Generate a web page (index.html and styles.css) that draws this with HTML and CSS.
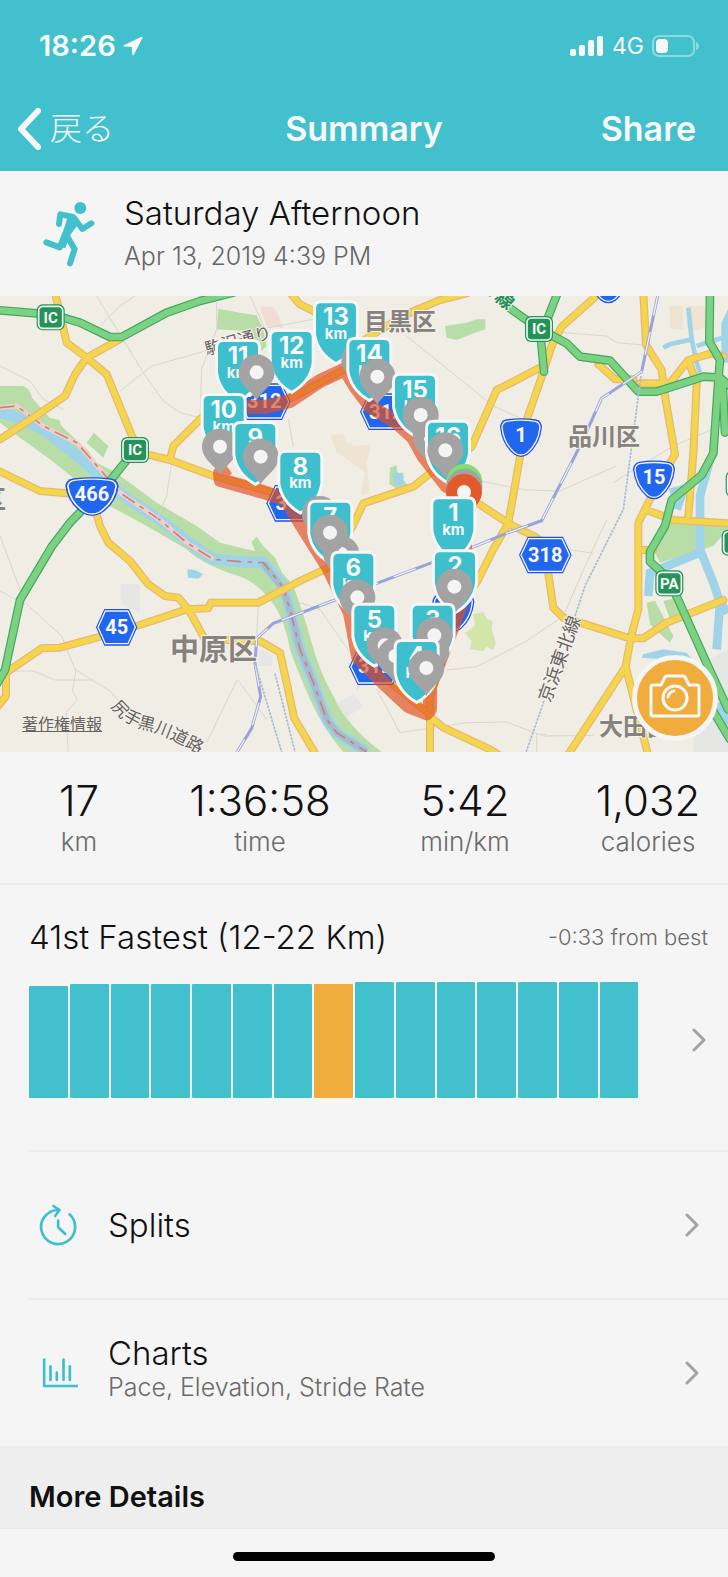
FILE: index.html
```
<!DOCTYPE html>
<html lang="ja">
<head>
    <meta charset="UTF-8">
    <meta name="viewport" content="width=device-width, initial-scale=1.0">
    <title>Summary</title>
    <link rel="stylesheet" href="styles.css">
</head>
<body>
    <header class="header">
        <div class="status-bar">
            <div class="status-time">
                <span>18:26</span>
                <svg class="icon-location" viewBox="0 0 20 20"><path d="M18.6 .8 .8 9.200q-1 .8.3 1.400l7.800.3.4 7.600q.5 1.600 1.500.2L19.600 1.700q.2-1.100-1-.9z"/></svg>
            </div>
            <div class="status-icons">
                <svg class="icon-signal" viewBox="0 0 34 22">
                    <rect x="0" y="14" width="6" height="7" rx="2"/>
                    <rect x="9" y="10" width="6" height="11" rx="2"/>
                    <rect x="18" y="5" width="6" height="16" rx="2"/>
                    <rect x="27" y="1" width="6" height="20" rx="2"/>
                </svg>
                <span class="network">4G</span>
                <svg class="icon-battery" viewBox="0 0 48 22">
                    <rect class="battery-case" x="1" y="1" width="41" height="20" rx="6"/>
                    <path class="battery-tip" d="M44 7q3 1 3 4t-3 4z"/>
                    <rect x="4" y="4" width="12" height="14" rx="4"/>
                </svg>
            </div>
        </div>
        <nav class="nav-bar">
            <button class="back-btn">
                <svg viewBox="0 0 24 42"><path d="M21 3 4 21l17 18"/></svg>
                <span>戻る</span>
            </button>
            <h1>Summary</h1>
            <button class="share-btn">Share</button>
        </nav>
    </header>

    <main>
        <section class="activity">
            <svg class="icon-runner" viewBox="40 36 156 198">
                <circle cx="152" cy="57" r="18"/>
                <path class="limb" d="M88 105l4-29 38 8 28 36 27-17M50 160l40 15 17-41 28 46-14 43"/>
                <path d="M114 74l20 4q12 6 17 20l-31 42-13 38-22-6 13-38 13-40z"/>
            </svg>
            <div>
                <h2>Saturday Afternoon</h2>
                <p>Apr 13, 2019 4:39 PM</p>
            </div>
        </section>

        <section class="map">
            <svg class="map-canvas" viewBox="0 0 2184 1368">
                <defs>
                    <path id="flag" d="M-44 0H44Q60 0 60 16V92Q52 146 0 176Q-52 146-60 92V16Q-60 0-44 0z"/>
                    <g id="pin">
                        <path d="M0 84C-14 56-54 38-54 0a54 54 0 0 1 108 0C54 38 14 56 0 84z"/>
                        <circle r="21" fill="#f4f4f4"/>
                    </g>
                    <g id="ic">
                        <rect x="-42" y="-39" width="84" height="78" rx="18" fill="#24935a"/>
                        <rect x="-36" y="-33" width="72" height="66" rx="13" fill="#24935a" stroke="#f4f4f4" stroke-width="5"/>
                    </g>
                    <g id="hex">
                        <path d="M-37-55H37L62 0 37 55H-37L-62 0z" fill="#1c50e8"/>
                        <path d="M-34-49H34L56 0 34 49H-34L-56 0z" fill="#2166ee" stroke="#f4f4f4" stroke-width="4"/>
                    </g>
                    <g id="hex-wide">
                        <path d="M-53-55H53L79 0 53 55H-53L-79 0z" fill="#1c50e8"/>
                        <path d="M-50-49H50L73 0 50 49H-50L-73 0z" fill="#2166ee" stroke="#f4f4f4" stroke-width="4"/>
                    </g>
                    <g id="onigiri">
                        <path d="M-44-55Q0-62 44-55 62-50 63-32 58 20 22 50 0 66-22 50-58 20-63-32-62-50-44-55z" fill="#1c50e8"/>
                        <path d="M-43-49Q0-56 43-49 56-46 57-31 52 17 19 45 0 59-19 45-52 17-57-31-56-46-43-49z" fill="#2166ee" stroke="#f4f4f4" stroke-width="4"/>
                    </g>
                    <path id="road-name" d="M332 1232Q372 1286 440 1302T640 1400"/>
                </defs>

                <!-- land, parks, water -->
                <rect class="land" width="2184" height="1368"/>
                <g class="park">
                    <path d="M0 270H68Q88 274 96 305L150 366 178 372 184 390 262 462 290 500 340 525 400 568 470 620 590 690 660 740 720 755 765 765 755 738 770 722 790 750 825 785 845 828 880 870Q910 950 935 1040T1000 1200Q1040 1290 1145 1368H1030Q970 1300 930 1210T870 1060Q850 950 800 900 760 850 690 832 600 800 560 760L440 690 330 630 250 570 150 490 60 425 0 380z"/>
                    <path d="M260 440 282 410 325 450 310 485z"/>
                    <path d="M655 38 720 50 770 58 790 100 800 150 785 165 740 105 650 100z"/>
                    <path d="M1335 90 1400 80 1430 70 1456 70V100L1420 112 1370 132 1340 125z"/>
                    <path d="M1170 515 1190 508 1192 530 1212 530 1205 545 1225 570 1195 582 1168 564z"/>
                    <path d="M2000 672H2184V700L2140 750 2080 770 1980 800 1960 760zM1940 920 1965 915 2020 1020 2010 1040 1950 985zM1990 915 2030 905 2050 960 2010 970z"/>
                    <path class="park-light" d="M1420 955 1450 948 1462 970 1478 975 1475 1000 1487 1040 1480 1062 1460 1052 1450 1065 1410 1060 1415 1035 1395 1010 1425 990z"/>
                </g>
                <path class="built" d="M992 417 1030 415 1040 440 1070 450 1110 445V465L1100 500 1110 590 1082 598 1095 530 1040 490 1010 470zM2008 30 2050 28V100H2012zM2060 30 2115 30V95L2080 105 2060 95z"/>
                <path class="campus" d="M780 35Q800 25 825 38L850 95 800 90z"/>
                <path class="block" d="M362 865H420V950L362 925zM780 1060 820 1080 815 1110 775 1110zM1010 1220 1060 1195 1090 1230 1040 1265zM2090 1110 2184 1060V1368H2080z"/>
                <g class="water">
                    <path d="M562 820 585 822 610 835 595 848 564 845zM2164 80 2184 40V200H2164zM1178 532 1192 528 1212 540 1205 574 1185 566zM1930 1075 1990 1060 2060 1070 2100 1120 2060 1110 1990 1090 1925 1085zM2150 1222 2184 1210V1290L2150 1262z"/>
                    <path class="canal" d="M2065 35 2075 130 2010 145 1990 155M2075 130 2090 200 2100 230M2090 150 2184 120"/>
                    <path class="canal wide" d="M2130 490 2100 600V760L2140 860 2160 920 2184 950M2100 770 1950 830 1945 900M2010 590 2050 580 2030 640M2160 920 2150 1060"/>
                    <path class="river" d="M0 350 60 366 130 400 220 470 280 520 340 575 400 620 480 672 560 735 640 790 720 797 790 800 850 870 875 960 900 1060 940 1160 980 1270 1010 1310 1100 1368"/>
                </g>
                <path class="river-bank" d="M0 335 50 330 130 390 230 440 300 520 360 590 480 672 560 740 640 790"/>
                <path class="river-core" d="M790 802 850 880 875 960 900 1060 940 1160 980 1270 1010 1310 1100 1368"/>
                <path class="border-line" d="M0 335 50 330 130 390 230 440 300 520 360 590 480 672 560 740 640 790 720 797 790 800 850 875 875 960 900 1060 940 1160 980 1270 1010 1310 1100 1368"/>

                <g class="lane">
                    <path d="M290 0 360 115 430 230 490 315 540 350 600 365M405 0 360 30 300 90M360 285 455 210 600 170 780 100 940 70M650 20V100L605 220 600 370M0 210 90 255 130 310 190 340M750 0 800 110M865 370 880 450M515 500 500 600 470 672M0 720 75 920 185 1020 225 1120 330 1185 420 1290M0 885 75 925M0 1125H100L165 1152H280M228 1120 218 1185 232 1212 198 1250 205 1368"/>
                    <path d="M1220 120 1480 330 1580 375M1440 555 1580 582 1680 585 1780 540 1850 510M1340 1122 1430 1112 1580 1035 1690 960 1760 800 1820 672M1130 1180 1200 1310 1400 1280 1520 1278 1630 1320 1780 1318M1610 1368V1315H1640M1690 110 1820 120 1850 140 1940 148M1840 560 1870 540 2020 450 2184 380M900 920 960 940 1050 1070M775 930 770 1020M620 1340 712 1150 800 1270M1110 1130 1070 1180M1700 760 1780 772"/>
                </g>

                <!-- roads -->
                <g class="road-case">
                    <path id="main-roads" d="M165-10 200 140 260 185 320 235 398 425 440 475 510 492 640 540 820 590M360 130 260 185 225 235 195 300 100 365 0 430-10 435M-10 522 120 585 200 592 275 600 300 690 325 740 390 795 445 865 495 900 535 905 565 940 615 1030 780 1035 840 1070 860 1160 882 1265 950 1380M-10 1235 18 1200V1130L125 1057 180 1055 290 1025 410 990 560 940 625 937 632 920H775L900 855 985 815M1000 800 1062 682 1090 622 1240 572 1290 532 1350 500 1415 452 1490 282 1530 262 1625 212M510 490 520 450 600 370 700 290M870-10 900 25 940 45 1010 100M1050 160 1140 102 1230 50 1320 12 1400-8M1800-10 1685 92 1655 150 1625 242 1580 372 1560 482 1525 682 1480 760 1435 850 1380 940 1290 1200V1375M1290 1262 1330 1295 1470 1360 1510 1385M1400 600 1530 685 1600 720 1640 745V800L1660 935 1690 965 1740 980 1890 1027H1930L2000 980 2170 912M1930-10 1938 147 1985 222 1995 300 2025 475 1955 600 1915 680V940L1893 1022 1877 1112 1705 1375M1877 1112 1945 1380M1920 262H2010L2065 192 2135 172 2170 182M2065 195 2090 262 2080 472 2065 660M1940 642 2020 672 2190 682M1795 205 1845 250H1900M1915 762H1960M870 308 1030 222M1160 1150 1290 1255"/>
                </g>
                <use href="#main-roads" class="road"/>
                <g class="express-case">
                    <path id="express" d="M-10 42 110 52 190 65 240 80 330 123H365L500 50 600 15 700-10M390 480 330 555 210 680 155 752 60 912 15 1122-10 1165M1530 37 1617 99M1673-10 1640 75 1617 99 1623 132 1632 227M1640 110 1700 142 1740 182 1830 194 1915 287H1970L2110 242 2160 245 2190 270M2130-10 2128 137 2160 192 2155 252 2140 472 2105 537 2015 612 1995 690 1950 767V797L2000 842 2035 912 2120 1102 2184 1240M2130 1230 2190 1330M2168 260 2175 410"/>
                </g>
                <use href="#express" class="express"/>

                <!-- railways -->
                <path class="rail" d="M1975-10 1925 227 1805 307 1740 450 1625 674 1530 708 1410 757 1130 862 1005 912 820 982 770 1027 765 1102 782 1202 755 1297 705 1378"/>
                <path class="rail-dash" d="M1975-10 1925 227 1805 307 1740 450 1625 674 1530 708 1410 757 1130 862 1005 912 820 982 770 1027 765 1102 782 1202 755 1297 705 1378"/>
                <path class="rail-dots" d="M1923 240 1870 640 1820 740 1755 870 1725 960M1632 1215 1576 1375M765 1102 845 1368M825 1132 885 1368"/>

                <!-- place names -->
                <g class="place">
                    <text x="1092" y="103" font-size="72">目黒区</text>
                    <text x="1704" y="446" font-size="72">品川区</text>
                    <text x="510" y="1093" font-size="87">中原区</text>
                    <text x="-60" y="640" font-size="78">区</text>
                    <text x="1797" y="1318" font-size="72">大田区</text>
                </g>
                <g class="street">
                    <text transform="translate(620 178) rotate(-15)" font-size="51">駒沢通り</text>
                    <text font-size="51"><textPath href="#road-name">尻手黒川道路</textPath></text>
                    <text transform="translate(1650 1222) rotate(-70)" font-size="54">京浜東北線</text>
                    <text class="street-green" transform="translate(1440-26) rotate(40)" font-size="54">号線</text>
                </g>

                <!-- route number signs -->
                <g class="sign">
                    <use href="#ic" x="152" y="64"/><text x="152" y="80">IC</text>
                    <use href="#ic" x="405" y="462"/><text x="405" y="478">IC</text>
                    <use href="#ic" x="1617" y="99"/><text x="1617" y="115">IC</text>
                    <use href="#ic" x="2008" y="862"/><text x="2008" y="878">PA</text>
                    <use href="#ic" x="2219" y="564"/>
                    <use href="#ic" x="2207" y="740"/>
                </g>
                <g class="sign sign-route">
                    <g transform="translate(276 602) scale(1.27 1)"><use href="#onigiri"/></g><text x="276" y="614">466</text>
                    <use href="#onigiri" x="1563" y="425"/><text x="1563" y="438">1</text>
                    <use href="#onigiri" x="1962" y="552"/><text x="1962" y="565">15</text>
                    <use href="#onigiri" x="1825" y="-36"/>
                    <use href="#onigiri" x="1360" y="950"/>
                    <use href="#hex" x="350" y="994"/><text x="350" y="1014">45</text>
                    <use href="#hex-wide" x="1636" y="777"/><text x="1636" y="797">318</text>
                    <use href="#hex-wide" x="793" y="317"/><text x="793" y="335">312</text>
                    <use href="#hex-wide" x="1159" y="347"/><text x="1159" y="368">312</text>
                    <use href="#hex-wide" x="878" y="622"/><text x="878" y="642">312</text>
                    <use href="#hex-wide" x="1126" y="1112"/><text x="1126" y="1132">312</text>
                </g>

                <!-- run track -->
                <path class="track" d="M684 515 660 532 662 552 790 588 860 612 900 680 985 815 1050 950 1075 1085 1150 1160 1225 1230 1280 1252 1290 1240 1290 1170 1370 960 1390 900 1395 750 1392 600 1340 570 1270 480 1240 425 1190 380 1110 330 1065 270 1035 220 960 255 870 315 800 332H742"/>

                <!-- km flags and photo pins, north to south -->
                <g class="flags">
                    <g transform="translate(1008 22)"><use href="#flag"/><text y="66">13</text><text class="unit" y="107">km</text></g>
                    <g transform="translate(875 108)"><use href="#flag"/><text y="66">12</text><text class="unit" y="107">km</text></g>
                    <g transform="translate(714 138)"><use href="#flag"/><text y="66">11</text><text class="unit" y="107">km</text></g>
                    <use href="#pin" x="770" y="229"/>
                    <use href="#pin" x="1078" y="192"/>
                    <g transform="translate(1108 132)"><use href="#flag"/><text y="66">14</text><text class="unit" y="107">km</text></g>
                    <use href="#pin" x="1132" y="242"/>
                    <g transform="translate(671 300)"><use href="#flag"/><text y="66">10</text><text class="unit" y="107">km</text></g>
                    <use href="#pin" x="660" y="452"/>
                    <g transform="translate(1245 239)"><use href="#flag"/><text y="66">15</text><text class="unit" y="107">km</text></g>
                    <use href="#pin" x="1292" y="425"/>
                    <use href="#pin" x="1262" y="357"/>
                    <g transform="translate(766 384)"><use href="#flag"/><text y="66">9</text><text class="unit" y="107">km</text></g>
                    <use href="#pin" x="782" y="482"/>
                    <g transform="translate(1344 380)"><use href="#flag"/><text y="66">16</text><text class="unit" y="107">km</text></g>
                    <use href="#pin" x="1336" y="463"/>
                    <g transform="translate(901 470)"><use href="#flag"/><text y="66">8</text><text class="unit" y="107">km</text></g>
                    <use href="#pin" class="pin-start" x="1393" y="558"/>
                    <use href="#pin" x="1393" y="572"/>
                    <use href="#pin" class="pin-end" x="1392" y="588"/>
                    <g transform="translate(1360 610)"><use href="#flag"/><text y="66">1</text><text class="unit" y="107">km</text></g>
                    <use href="#pin" x="960" y="654"/>
                    <g transform="translate(991 620)"><use href="#flag"/><text y="66">7</text><text class="unit" y="107">km</text></g>
                    <use href="#pin" x="1024" y="774"/>
                    <use href="#pin" x="990" y="710"/>
                    <g transform="translate(1060 773)"><use href="#flag"/><text y="66">6</text><text class="unit" y="107">km</text></g>
                    <use href="#pin" x="1072" y="904"/>
                    <g transform="translate(1365 769)"><use href="#flag"/><text y="66">2</text><text class="unit" y="107">km</text></g>
                    <use href="#pin" x="1363" y="872"/>
                    <g transform="translate(1123 929)"><use href="#flag"/><text y="66">5</text><text class="unit" y="107">km</text></g>
                    <use href="#pin" x="1154" y="1048"/>
                    <use href="#pin" x="1186" y="1080"/>
                    <g transform="translate(1298 929)"><use href="#flag"/><text y="66">3</text><text class="unit" y="107">km</text></g>
                    <use href="#pin" x="1294" y="1064"/>
                    <use href="#pin" x="1303" y="1018"/>
                    <g transform="translate(1250 1038)"><use href="#flag"/><text y="66">4</text><text class="unit" y="107">km</text></g>
                    <use href="#pin" x="1279" y="1116"/>
                </g>
            </svg>
            <a class="map-legal" href="#">著作権情報</a>
            <button class="camera-btn" aria-label="Camera">
                <svg viewBox="0 0 52 44">
                    <path d="M4 11H12L16 3Q16.500 2 18 2H34Q35.500 2 36 3L40 11H48Q50 11 50 13V40Q50 42 48 42H4Q2 42 2 40V13Q2 11 4 11z"/>
                    <circle cx="26" cy="24" r="12"/>
                    <path d="M19 23Q20 18 25 17"/>
                </svg>
            </button>
        </section>

        <section class="stats">
            <div><strong>17</strong><span>km</span></div>
            <div><strong>1:36:58</strong><span>time</span></div>
            <div><strong>5:42</strong><span>min/km</span></div>
            <div><strong>1,032</strong><span>calories</span></div>
        </section>

        <section class="fastest">
            <div class="fastest-head">
                <h2>41st Fastest (12-22 Km)</h2>
                <span>-0:33 from best</span>
            </div>
            <div class="fastest-body">
                <div class="bars">
                    <i style="height: 112px"></i>
                    <i style="height: 114px"></i>
                    <i style="height: 114px"></i>
                    <i style="height: 114px"></i>
                    <i style="height: 114px"></i>
                    <i style="height: 114px"></i>
                    <i style="height: 114px"></i>
                    <i class="current" style="height: 114px"></i>
                    <i style="height: 116px"></i>
                    <i style="height: 116px"></i>
                    <i style="height: 116px"></i>
                    <i style="height: 116px"></i>
                    <i style="height: 116px"></i>
                    <i style="height: 116px"></i>
                    <i style="height: 116px"></i>
                </div>
                <svg class="chevron" viewBox="0 0 14 24"><path d="M2 2l10 10L2 22"/></svg>
            </div>
        </section>

        <a class="row" href="#">
            <svg class="icon-splits" viewBox="28 28 116 126"><path d="M119 59A51 51 0 1 1 88 46M71 34l18 12-13 18M85 78v20l21 20"/></svg>
            <span class="row-text"><b>Splits</b></span>
            <svg class="chevron" viewBox="0 0 14 24"><path d="M2 2l10 10L2 22"/></svg>
        </a>
        <a class="row" href="#">
            <svg class="icon-charts" viewBox="28 470 116 126"><path d="M43 493v79h99M62 513v41M81 532v22M101 493v61M120 513v41"/></svg>
            <span class="row-text"><b>Charts</b><small>Pace, Elevation, Stride Rate</small></span>
            <svg class="chevron" viewBox="0 0 14 24"><path d="M2 2l10 10L2 22"/></svg>
        </a>

        <h3 class="more">More Details</h3>
    </main>
    <footer class="home"><div class="home-indicator"></div></footer>
</body>
</html>
```
FILE: styles.css
```
* {
    box-sizing: border-box;
}

body {
    margin: 0;
    font-family: Inter, "Noto Sans CJK JP", sans-serif;
    font-weight: 300;
    background-color: #f5f5f5;
    color: #111;
}

h1, h2, h3, p {
    margin: 0;
    font-weight: 300;
}

button {
    padding: 0;
    border: none;
    background: none;
    color: inherit;
    font-family: inherit;
    cursor: pointer;
}

a {
    color: inherit;
    text-decoration: none;
}

svg {
    display: block;
}

/* header */
.header {
    height: 171px;
    background-color: #43c0ce;
    color: #f8f8f8;
}

.status-bar {
    display: flex;
    justify-content: space-between;
    padding: 28px 28px 0 39px;
    height: 86px;
    line-height: 36px;
}

.status-time, .status-icons {
    display: flex;
    align-items: center;
    height: 36px;
}

.status-time {
    gap: 7px;
    font-size: 29px;
    font-weight: 600;
}

.status-icons {
    gap: 8px;
    font-size: 23px;
    font-weight: 400;
}

.header svg {
    fill: #f8f8f8;
}

.icon-location {
    width: 20px;
    height: 20px;
}

.icon-signal {
    width: 34px;
    height: 22px;
}

.icon-battery {
    width: 48px;
    height: 22px;
}

.header .battery-case {
    fill: none;
    stroke: #8fd9e1;
    stroke-width: 2;
}

.header .battery-tip {
    fill: #8fd9e1;
}

.nav-bar {
    display: grid;
    grid-template-columns: 1fr auto 1fr;
    align-items: center;
    height: 85px;
}

.back-btn {
    display: flex;
    align-items: center;
    gap: 9px;
    padding-left: 17px;
    font-size: 32px;
    line-height: 42px;
    font-weight: 300;
}

.back-btn svg {
    width: 24px;
    height: 42px;
    fill: none;
    stroke: #f8f8f8;
    stroke-width: 6;
    stroke-linecap: round;
    stroke-linejoin: round;
}

.nav-bar h1, .share-btn {
    font-size: 34px;
    line-height: 44px;
    font-weight: 600;
}

.share-btn {
    justify-self: end;
    padding-right: 32px;
}

/* activity title */
.activity {
    display: flex;
    align-items: center;
    gap: 29px;
    height: 125px;
    padding-left: 43px;
}

.icon-runner {
    width: 52px;
    height: 66px;
    fill: #43c0ce;
}

.icon-runner .limb {
    fill: none;
    stroke: #43c0ce;
    stroke-width: 18;
    stroke-linecap: round;
    stroke-linejoin: round;
}

.activity h2, .fastest h2 {
    font-size: 33px;
    line-height: 44px;
}

.activity p {
    font-size: 25px;
    line-height: 42px;
    color: #666;
}

/* map */
.map {
    position: relative;
}

.map-canvas {
    width: 100%;
    height: auto;
    overflow: hidden;
}

.land {
    fill: #f0ede5;
}

.park {
    fill: #b9dda6;
}

.park-light {
    fill: #d2e6aa;
}

.built {
    fill: #efe4d2;
}

.campus {
    fill: #f2dcd8;
}

.block {
    fill: #e6e6e4;
}

.water {
    fill: #9fd4e8;
}

.canal, .river {
    fill: none;
    stroke: #9fd4e8;
    stroke-width: 14;
}

.canal.wide {
    stroke-width: 26;
}

.river {
    stroke-width: 34;
}

.river-bank, .river-core {
    fill: none;
    stroke: #f1cfc8;
    stroke-width: 14;
}

.river-core {
    stroke: #a5bccb;
    stroke-width: 20;
}

.border-line {
    fill: none;
    stroke: #cf8078;
    stroke-width: 5;
    stroke-dasharray: 44 18 14 18;
}

.lane {
    fill: none;
    stroke: #d9d6cf;
    stroke-width: 3;
}

.road-case, .road, .express-case, .express {
    fill: none;
    stroke-linejoin: round;
    stroke-linecap: round;
}

.road-case {
    stroke: #e9b477;
    stroke-width: 24;
}

/* same shape again, narrower, over its outline */
.road {
    stroke: #f4d64d;
    stroke-width: 17;
}

.express-case {
    stroke: #46a565;
    stroke-width: 26;
}

.express {
    stroke: #7bd381;
    stroke-width: 19;
}

.rail, .rail-dash, .rail-dots {
    fill: none;
    stroke: #9aa2da;
    stroke-width: 9;
}

.rail-dash {
    stroke: #f0effa;
    stroke-width: 4;
    stroke-dasharray: 70 50;
}

.rail-dots {
    stroke: #a5bdd3;
    stroke-width: 5;
    stroke-dasharray: 8 3;
}

.place, .street {
    font-family: "Noto Sans CJK JP", sans-serif;
    font-weight: 400;
    fill: #86827d;
    stroke: #f4f2ec;
    stroke-width: 6;
    stroke-linejoin: round;
    paint-order: stroke;
}

.place {
    font-weight: 700;
}

.street {
    fill: #66625e;
}

.street-green {
    fill: #24935a;
    font-weight: 700;
}

.sign {
    font-family: Roboto, sans-serif;
    font-size: 45px;
    font-weight: 700;
    text-anchor: middle;
    fill: #f8f8f8;
}

.sign-route {
    font-size: 60px;
}

.track {
    fill: none;
    stroke: #e2501f;
    stroke-width: 42;
    stroke-linejoin: round;
    stroke-opacity: 0.68;
}

.flags {
    font-size: 72px;
    font-weight: 700;
    text-anchor: middle;
    fill: #a3a3a3;
}

.flags g use {
    fill: #3dbfcd;
    stroke: #f6f6f6;
    stroke-width: 18;
    paint-order: stroke;
}

.flags text {
    fill: #f8f8f8;
}

.flags .unit {
    font-size: 45px;
}

.pin-start {
    fill: #7fe070;
}

.pin-end {
    fill: #e25a2c;
}

.map-legal {
    position: absolute;
    left: 22px;
    bottom: 16px;
    font-size: 16px;
    line-height: 24px;
    font-weight: 400;
    color: #66635f;
    text-decoration: underline;
}

.camera-btn {
    position: absolute;
    right: 10px;
    bottom: 11px;
    display: flex;
    align-items: center;
    justify-content: center;
    width: 86px;
    height: 86px;
    border: 5px solid #f5f5f5;
    border-radius: 50%;
    background-color: #f0ad3e;
}

.camera-btn svg {
    width: 52px;
    height: 44px;
    margin-bottom: 4px;
    fill: none;
    stroke: #f8f8f8;
    stroke-width: 3;
    stroke-linecap: round;
    stroke-linejoin: round;
}

/* totals */
.stats {
    display: grid;
    grid-template-columns: 79fr 102fr 103fr 80fr;
    height: 133px;
    padding-top: 24px;
    border-bottom: 2px solid #ececec;
    text-align: center;
}

.stats strong, .stats span {
    display: block;
}

.stats strong {
    font-size: 42px;
    line-height: 50px;
    font-weight: 300;
}

.stats span {
    font-size: 26px;
    line-height: 32px;
    color: #6b6b6b;
}

/* fastest runs */
.fastest {
    padding: 30px 20px 52px 29px;
}

.fastest-head, .fastest-body {
    display: flex;
    align-items: center;
    justify-content: space-between;
}

.fastest-body {
    margin-top: 23px;
    padding-right: 2px;
}

.fastest-head span {
    font-size: 22px;
    color: #6b6b6b;
}

.bars {
    display: flex;
    align-items: flex-end;
    gap: 2px;
    width: 90%;
    height: 116px;
}

.bars i {
    flex: 1;
    border-radius: 1px;
    background-color: #43c0ce;
}

.bars .current {
    background-color: #f0ad3e;
}

.chevron {
    width: 14px;
    height: 24px;
    fill: none;
    stroke: #a3a3a3;
    stroke-width: 3;
    stroke-linecap: round;
    stroke-linejoin: round;
}

/* list rows */
.row {
    display: flex;
    align-items: center;
    height: 148px;
    margin-left: 29px;
    padding: 0 29px 0 10px;
    border-top: 2px solid #ececec;
}

.icon-splits, .icon-charts {
    width: 39px;
    height: 42px;
    fill: none;
    stroke: #3dbfcd;
    stroke-width: 8;
    stroke-linecap: round;
    stroke-linejoin: round;
}

.row-text {
    display: flex;
    flex-direction: column;
    flex: 1;
    padding-left: 30px;
}

.row b {
    font-size: 33px;
    line-height: 36px;
    font-weight: 300;
}

.row small {
    margin-bottom: 8px;
    font-size: 25px;
    line-height: 32px;
    color: #6b6b6b;
}

.more {
    height: 83px;
    padding: 33px 29px 0;
    background-color: #eee;
    border-bottom: 1px solid #e8e8e8;
    font-size: 29px;
    line-height: 36px;
    font-weight: 600;
}

.home {
    padding: 23px 0 16px;
}

.home-indicator {
    width: 36%;
    height: 9px;
    margin: 0 auto;
    border-radius: 5px;
    background-color: #000;
}
```
